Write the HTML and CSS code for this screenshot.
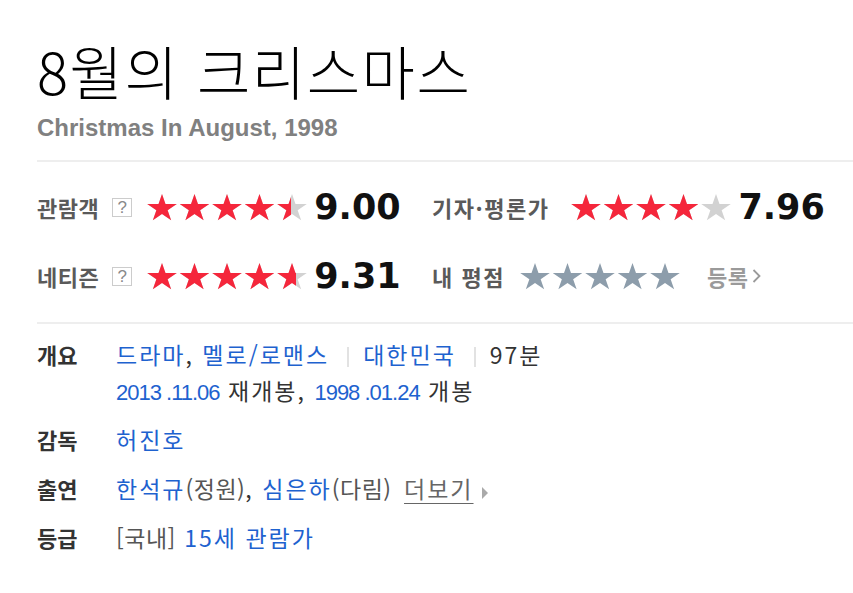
FILE: index.html
```html
<!DOCTYPE html>
<html lang="ko">
<head>
<meta charset="utf-8">
<title>8월의 크리스마스</title>
<link rel="stylesheet" href="styles.css">
</head>
<body>
<svg class="defs" width="0" height="0" aria-hidden="true">
  <defs>
    <symbol id="star" viewBox="0 0 27 26" preserveAspectRatio="none">
      <path d="M13.5 0L16.64 9.67H26.81L18.59 15.65L21.73 25.33L13.5 19.35L5.27 25.33L8.41 15.65L0.19 9.67H10.36Z"/>
    </symbol>
  </defs>
</svg>
<div class="movie">
  <h2 class="title">8월의 크리스마스</h2>
  <p class="sub">Christmas In August, 1998</p>

  <div class="scores">
    <div class="score">
      <span class="label">관람객</span><span class="help">?</span>
      <svg class="stars" viewBox="0 0 160 27" width="160" height="27">
        <g class="off"><use href="#star" x="0" width="30" height="27"/><use href="#star" x="32.5" width="30" height="27"/><use href="#star" x="65" width="30" height="27"/><use href="#star" x="97.5" width="30" height="27"/><use href="#star" x="130" width="30" height="27"/></g>
        <svg width="144" height="27"><g class="on"><use href="#star" x="0" width="30" height="27"/><use href="#star" x="32.5" width="30" height="27"/><use href="#star" x="65" width="30" height="27"/><use href="#star" x="97.5" width="30" height="27"/><use href="#star" x="130" width="30" height="27"/></g></svg>
      </svg>
      <span class="num">9.00</span>
    </div>
    <div class="score">
      <span class="label wide">기자·평론가</span>
      <svg class="stars" viewBox="0 0 160 27" width="160" height="27">
        <g class="off"><use href="#star" x="0" width="30" height="27"/><use href="#star" x="32.5" width="30" height="27"/><use href="#star" x="65" width="30" height="27"/><use href="#star" x="97.5" width="30" height="27"/><use href="#star" x="130" width="30" height="27"/></g>
        <svg width="127" height="27"><g class="on"><use href="#star" x="0" width="30" height="27"/><use href="#star" x="32.5" width="30" height="27"/><use href="#star" x="65" width="30" height="27"/><use href="#star" x="97.5" width="30" height="27"/><use href="#star" x="130" width="30" height="27"/></g></svg>
      </svg>
      <span class="num">7.96</span>
    </div>
    <div class="score">
      <span class="label">네티즌</span><span class="help">?</span>
      <svg class="stars" viewBox="0 0 160 27" width="160" height="27">
        <g class="off"><use href="#star" x="0" width="30" height="27"/><use href="#star" x="32.5" width="30" height="27"/><use href="#star" x="65" width="30" height="27"/><use href="#star" x="97.5" width="30" height="27"/><use href="#star" x="130" width="30" height="27"/></g>
        <svg width="149" height="27"><g class="on"><use href="#star" x="0" width="30" height="27"/><use href="#star" x="32.5" width="30" height="27"/><use href="#star" x="65" width="30" height="27"/><use href="#star" x="97.5" width="30" height="27"/><use href="#star" x="130" width="30" height="27"/></g></svg>
      </svg>
      <span class="num">9.31</span>
    </div>
    <div class="score">
      <span class="label my-label">내 평점</span>
      <svg class="stars" viewBox="0 0 160 27" width="160" height="27">
        <g class="my"><use href="#star" x="0" width="30" height="27"/><use href="#star" x="32.5" width="30" height="27"/><use href="#star" x="65" width="30" height="27"/><use href="#star" x="97.5" width="30" height="27"/><use href="#star" x="130" width="30" height="27"/></g>
      </svg>
      <a class="reg" href="#">등록<svg class="chev" width="9" height="16" viewBox="0 0 9 16"><path d="M1.5 2L7.5 8L1.5 14" fill="none" stroke="currentColor" stroke-width="1.8"/></svg></a>
    </div>
  </div>

  <dl class="info">
    <div class="row">
      <dt>개요</dt>
      <dd>
        <div class="line"><a href="#">드라마</a>, <a href="#">멜로/로맨스</a><span class="bar"></span><a href="#">대한민국</a><span class="bar"></span><span class="plain">97분</span></div>
        <div class="line"><a href="#" class="date">2013 .11.06</a> <span class="plain">재개봉,</span> <a href="#" class="date">1998 .01.24</a> <span class="plain">개봉</span></div>
      </dd>
    </div>
    <div class="row">
      <dt>감독</dt>
      <dd><div class="line"><a href="#">허진호</a></div></dd>
    </div>
    <div class="row">
      <dt>출연</dt>
      <dd><div class="line"><a href="#">한석규</a><span class="paren">(정원)</span>, <a href="#">심은하</a><span class="paren">(다림)</span> <a href="#" class="more">더보기</a><span class="tri"></span></div></dd>
    </div>
    <div class="row">
      <dt>등급</dt>
      <dd><div class="line"><span class="paren">[국내]</span> <a href="#">15세 관람가</a></div></dd>
    </div>
  </dl>
</div>
</body>
</html>
```

FILE: styles.css
```css
* { box-sizing: border-box; }
html, body { margin: 0; padding: 0; background: #fff; }
body {
  font-family: "Noto Sans CJK KR", "Liberation Sans", sans-serif;
  color: #333;
}
.defs { position: absolute; width: 0; height: 0; overflow: hidden; }

.movie { padding: 34px 0 0 37px; }

.title {
  margin: 0;
  font-size: 58px;
  font-weight: 300;
  line-height: 72px;
  color: #000;
  letter-spacing: 1.5px;
}
.sub {
  margin: 8px 0 0;
  font-family: "Liberation Sans", Arial, sans-serif;
  font-weight: 700;
  font-size: 24px;
  line-height: 28px;
  color: #808080;
}

.scores {
  margin-top: 18px;
  border-top: 2px solid #eeeeee;
  padding: 23px 0 24px;
  display: grid;
  grid-template-columns: 395px 1fr;
  row-gap: 25px;
  border-bottom: 2px solid #eeeeee;
}
.score {
  display: flex;
  align-items: center;
  height: 44px;
}
.label {
  font-size: 22px;
  font-weight: 700;
  color: #5a5a5a;
  letter-spacing: 0.5px;
  margin-right: 13px;
}
.label.wide { letter-spacing: 1.5px; margin-right: 22px; }
.label.my-label { letter-spacing: 1.5px; margin-right: 15px; }
.help {
  display: inline-flex;
  align-items: center;
  justify-content: center;
  width: 20px;
  height: 19px;
  border: 1px solid #cccccc;
  color: #8a8a8a;
  font-family: "Liberation Sans", Arial, sans-serif;
  font-size: 17px;
  line-height: 1;
  margin-right: 15px;
}
.stars { display: block; flex: none; }
.stars .off { fill: #d2d2d2; }
.stars .on { fill: #f5263b; }
.stars .my { fill: #8d9dab; }
.num {
  margin-left: 7px;
  font-family: "DejaVu Sans", "Liberation Sans", sans-serif;
  font-weight: 700;
  font-size: 35px;
  color: #111;
}
.reg {
  margin-left: 27px;
  display: inline-flex;
  align-items: center;
  gap: 4px;
  font-size: 22px;
  font-weight: 700;
  color: #9a9a9a;
  text-decoration: none;
  letter-spacing: 0.5px;
}
.chev { display: block; }

.info { margin: 0; padding-top: 12px; }
.row { display: flex; margin-bottom: 13px; }
dt {
  width: 79px;
  flex: none;
  font-size: 22px;
  font-weight: 700;
  line-height: 36px;
  height: 36px;
  color: #333;
}
dd { margin: 0; }
.line {
  font-size: 23px;
  line-height: 36px;
  height: 36px;
  color: #333;
  letter-spacing: 2px;
  white-space: nowrap;
}
.line a { color: #1e62cf; text-decoration: none; }
.line .date {
  font-family: "Liberation Sans", Arial, sans-serif;
  font-size: 22px;
  letter-spacing: -1px;
}
.plain { color: #333; }
.paren { color: #555; letter-spacing: 0.5px; }
.bar {
  display: inline-block;
  width: 2px;
  height: 20px;
  background: #e2e2e2;
  margin: 0 14px 0 18px;
  vertical-align: -3px;
}
.line a.more {
  margin-left: 4px;
  color: #666;
  text-decoration: underline;
  text-underline-offset: 5px;
  text-decoration-thickness: 1px;
}
.tri {
  display: inline-block;
  width: 0;
  height: 0;
  border-top: 6px solid transparent;
  border-bottom: 6px solid transparent;
  border-left: 6px solid #aaa;
  margin-left: 8px;
  vertical-align: -1px;
}
```
